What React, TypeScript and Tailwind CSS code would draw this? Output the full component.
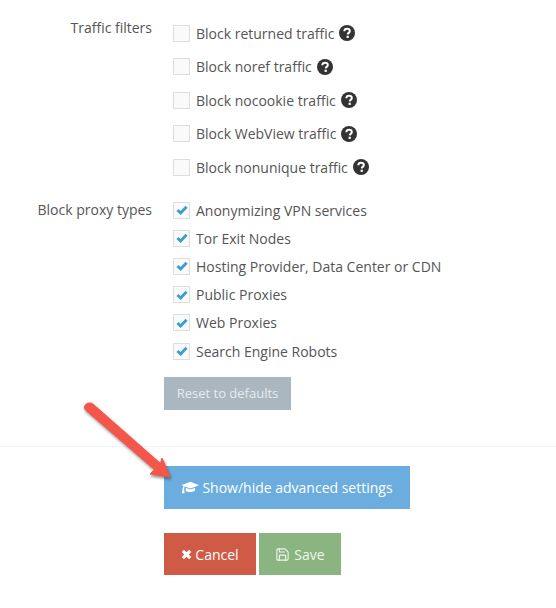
import { Save } from "lucide-react"

const trafficFilters = [
  "Block returned traffic",
  "Block noref traffic",
  "Block nocookie traffic",
  "Block WebView traffic",
  "Block nonunique traffic",
]

const proxyTypes = [
  "Anonymizing VPN services",
  "Tor Exit Nodes",
  "Hosting Provider, Data Center or CDN",
  "Public Proxies",
  "Web Proxies",
  "Search Engine Robots",
]

function Box({ checked }: { checked?: boolean }) {
  return (
    <span className="flex h-[17px] w-[17px] shrink-0 items-center justify-center border border-[#dcdfe2] bg-[#fafafa]">
      {checked && (
        <svg viewBox="0 0 13 11" className="h-[10px] w-[12px]">
          <path d="M1.5 5.5 L5 8.8 L11.5 2" fill="none" stroke="#3a9fd0" strokeWidth="3.2" />
        </svg>
      )}
    </span>
  )
}

function HelpIcon() {
  return (
    <svg viewBox="0 0 16 16" className="h-4 w-4 shrink-0">
      <circle cx="8" cy="8" r="8" fill="#333333" />
      <path d="M5.3 6.2c.1-1.5 1.2-2.4 2.8-2.4 1.5 0 2.7.9 2.7 2.2 0 1.9-2 1.8-2.1 3.4" fill="none" stroke="#fff" strokeWidth="2" />
      <rect x="7.6" y="10.7" width="2.2" height="2.2" fill="#fff" />
    </svg>
  )
}

function Arrow() {
  return (
    <svg
      viewBox="0 0 556 608"
      className="pointer-events-none absolute left-0 top-0 h-[608px] w-[556px] drop-shadow-[1px_2px_1.5px_rgba(50,40,40,0.55)]"
    >
      <path
        d="M85 409.5 C83.5 406 85.5 403 90 403 C91.5 403 92.5 403.5 93.5 404.5 L160.5 463.5 L162 458 L170 477 L150 474 L154.5 469.5 Z"
        fill="#f4574a"
        stroke="#f4574a"
        strokeWidth="1"
        strokeLinejoin="round"
      />
    </svg>
  )
}

export default function App() {
  return (
    <div
      className="relative h-[608px] w-[556px] overflow-hidden bg-white text-[14px] text-[#555555]"
      style={{ fontFamily: '"Open Sans", sans-serif' }}
    >
      <div className="pt-[16.5px]">
        <div className="flex">
          <div className="w-[152px] pt-[1.5px] text-right leading-[20px]">Traffic filters</div>
          <div className="ml-[21px] flex flex-col">
            {trafficFilters.map((label) => (
              <div key={label} className="flex h-[33.5px] items-center">
                <Box />
                <span className="ml-[6px]">{label}</span>
                <span className="ml-[5px]">
                  <HelpIcon />
                </span>
              </div>
            ))}
          </div>
        </div>

        <div className="mt-[12px] flex">
          <div className="w-[152px] pt-[4px] text-right leading-[20px]">Block proxy types</div>
          <div className="ml-[21px] flex flex-col">
            {proxyTypes.map((label) => (
              <div key={label} className="flex h-[28.2px] items-center">
                <Box checked />
                <span className="ml-[6px]">{label}</span>
              </div>
            ))}
          </div>
        </div>

        <div className="ml-[164px] mt-[11.5px]">
          <button className="h-[33px] w-[127px] bg-[#aab7c1] pt-[2px] text-center text-[13px] text-[#e6ebee]">
            Reset to defaults
          </button>
        </div>
      </div>

      <div className="mt-[36px] border-t border-[#f2f2f2] pl-[164px] pt-[19px]">
        <button className="flex h-[43px] w-[246px] items-center justify-center gap-[3px] bg-[#6badde] text-white">
          <svg viewBox="0 0 20 16" className="h-[15px] w-[18px]" fill="#fff">
            <path d="M10.5 1.5 L20 5.5 L10.5 9.2 L4.2 7 C3.6 7.6 3.4 8.4 3.4 9.2 C3.8 9.5 3.8 10.1 3.5 10.4 L4 14.5 L1 14.5 L1.8 10.4 C1.4 10.1 1.4 9.5 1.9 9.2 C1.9 7.9 2.2 7 2.9 6.2 L0.5 5.3 C4 4.2 7 2.8 10.5 1.5 Z" />
            <path d="M5.2 8.4 L10.5 10.3 L15.6 8.4 L15.8 11 C14 13.4 8 13.6 5.2 12.2 Z" />
          </svg>
          <span>Show/hide advanced settings</span>
        </button>

        <div className="mt-[24px] flex gap-[3px]">
          <button className="flex h-[42px] w-[92px] items-center justify-center gap-[3px] bg-[#cf5b47] pt-[1px] text-white">
            <svg viewBox="0 0 12 12" className="h-[11px] w-[11px]">
              <path d="M2 2 L10 10 M10 2 L2 10" stroke="#fff" strokeWidth="3.4" />
            </svg>
            <span>Cancel</span>
          </button>
          <button className="flex h-[42px] w-[82px] items-center justify-center gap-[4px] bg-[#8ab580] pt-[1px] text-[#eef5ec]">
            <Save size={15} strokeWidth={1.8} />
            <span>Save</span>
          </button>
        </div>
      </div>

      <Arrow />
    </div>
  )
}
